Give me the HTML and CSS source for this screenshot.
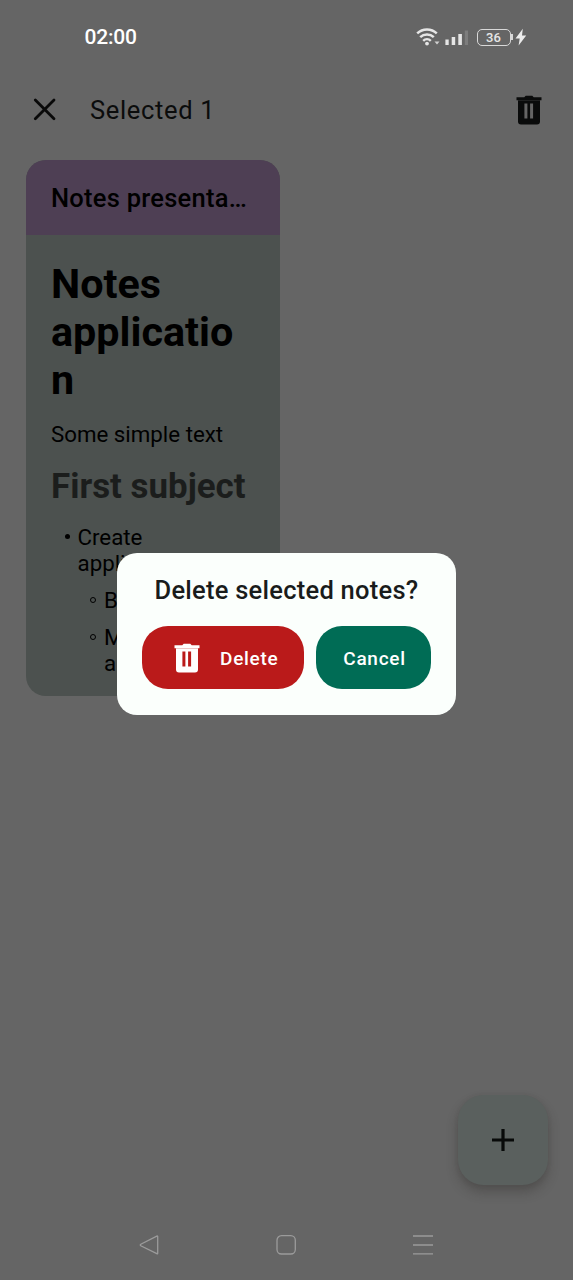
FILE: index.html
```html
<!DOCTYPE html>
<html lang="en">
<head>
<meta charset="utf-8">
<title>Notes</title>
<link rel="stylesheet" href="styles.css">
</head>
<body>
<div class="screen">
  <header class="status">
    <span class="clock">02:00</span>
    <div class="status-icons">
      <svg width="54" height="20" viewBox="0 0 54 20">
        <g fill="none" stroke="#e6e6e6" stroke-width="2.5">
          <path d="M1.2 6.4a14.2 14.2 0 0 1 19.6 0"/>
          <path d="M4.2 10.2a9.8 9.8 0 0 1 13.6 0"/>
          <path d="M7.2 13.8a5.6 5.6 0 0 1 7.6 0"/>
        </g>
        <circle cx="11" cy="16.6" r="1.9" fill="#e6e6e6"/>
        <path d="M18.5 14.6h5l-2.5 2.9z" fill="#d0d0d0"/>
        <path d="M29.4 12.6h3.3v5.4h-3.3zM35.7 10.1h3.5v7.9h-3.5zM42.3 7.1h3.6v10.9h-3.6z" fill="#e6e6e6"/>
        <path d="M48.8 3.5h3.2v14.5h-3.2z" fill="#7d7d7d"/>
      </svg>
      <span class="battery">36</span>
      <svg class="bolt" width="12" height="19" viewBox="0 0 12 19"><path d="M7.8.8L.5 10.4h4.2L3.6 17.6l7.6-10H7z" fill="#ececec"/></svg>
    </div>
  </header>

  <div class="toolbar">
    <svg class="close" width="24" height="24" viewBox="0 0 24 24"><path d="M2.3 2L21 20.7M21 2L2.3 20.7" fill="none" stroke="#090909" stroke-width="2.8" stroke-linecap="round"/></svg>
    <span class="toolbar-title">Selected 1</span>
    <svg class="trash" width="26" height="30" viewBox="0 0 26 30" fill="#0a0b0b"><path fill-rule="evenodd" d="M.5 2.2h7.8L9.7.7h6.6l1.4 1.5h7.8v3H.5zM2 5h22v21.5a3 3 0 0 1-3 3H5a3 3 0 0 1-3-3zM8.4 8.5v15h3v-15zM14.1 8.5v15h3v-15z"/></svg>
  </div>

  <main class="notes">
    <article class="note">
      <div class="note-title">Notes presentation</div>
      <div class="note-body">
        <h1>Notes application</h1>
        <p>Some simple text</p>
        <h2>First subject</h2>
        <ul class="list">
          <li>Create<br>appli
            <ul class="sublist">
              <li>B</li>
              <li>M<br>a</li>
            </ul>
          </li>
        </ul>
      </div>
    </article>
  </main>

  <div class="fab-row">
    <div class="fab">
      <svg width="24" height="24" viewBox="0 0 24 24"><path d="M12 1v22M1 12h22" stroke="#080a09" stroke-width="3.2"/></svg>
    </div>
  </div>

  <nav class="system-nav">
    <svg width="22" height="22" viewBox="0 0 22 22"><path d="M18.7 2.5v16.8q0 .8-.9.4L1.8 11.8q-1-.8 0-1.6L17.8 2.1q.9-.4.9.4z"/></svg>
    <svg width="22" height="22" viewBox="0 0 22 22"><rect x="1" y="1.7" width="18.3" height="18.3" rx="4.5"/></svg>
    <svg width="22" height="22" viewBox="0 0 22 22"><path d="M1 2h20M1 11h20M1 19.8h20"/></svg>
  </nav>

  <div class="overlay">
    <section class="dialog">
      <div class="dialog-title">Delete selected notes?</div>
      <div class="actions">
        <div class="button delete">
          <svg width="26" height="30" viewBox="0 0 26 30" fill="#fff"><path fill-rule="evenodd" d="M.5 2.2h7.8L9.7.7h6.6l1.4 1.5h7.8v3H.5zM2 5h22v21.5a3 3 0 0 1-3 3H5a3 3 0 0 1-3-3zM8.4 8.5v15h3v-15zM14.1 8.5v15h3v-15z"/></svg>
          <span>Delete</span>
        </div>
        <div class="button cancel"><span>Cancel</span></div>
      </div>
    </section>
  </div>
</div>
</body>
</html>
```
FILE: styles.css
```css
* { box-sizing: border-box; }

body {
  margin: 0;
  font-family: Roboto, sans-serif;
}

svg { display: block; flex: none; }

.screen {
  position: relative;
  display: flex;
  flex-direction: column;
  width: 573px;
  height: 1280px;
  overflow: hidden;
  background: #656565;
  color: #000;
}

.status {
  display: flex;
  align-items: center;
  justify-content: space-between;
  height: 74px;
  padding: 0 46.5px 0 84.5px;
}

.clock {
  color: #fff;
  font-size: 21px;
  font-weight: 500;
  line-height: 24px;
  letter-spacing: -0.2px;
}

.status-icons {
  display: flex;
  align-items: center;
}

.battery {
  position: relative;
  width: 34px;
  height: 17px;
  margin: 0 4px 0 7px;
  border: 1.5px solid #d8d8d8;
  border-radius: 5px;
  color: #e6e6e6;
  font-size: 13px;
  font-weight: 500;
  line-height: 15.5px;
  text-align: center;
}

.battery::after {
  content: "";
  position: absolute;
  top: 4px;
  right: -3px;
  width: 1.5px;
  height: 6px;
  background: #d8d8d8;
}

.toolbar {
  display: flex;
  align-items: center;
  height: 72px;
  padding: 0 32px 0 33px;
}

.toolbar-title {
  flex: 1;
  margin-left: 33px;
  color: #0b0c0c;
  font-size: 25.5px;
  letter-spacing: 0.65px;
}

.trash { margin: -1px -0.5px 0 0; }

.notes { padding: 14px 25.5px 0; }

.note {
  width: 254.5px;
  height: 536px;
  overflow: hidden;
  border-radius: 20px;
  background: #4c514f;
}

.note-title {
  height: 74.5px;
  padding: 0 25.5px;
  overflow: hidden;
  background: #4e3f54;
  font-size: 25.5px;
  font-weight: 500;
  line-height: 76px;
  letter-spacing: 0.25px;
  text-overflow: ellipsis;
  white-space: nowrap;
}

.note-body {
  padding: 25px 25.5px 0;
  font-size: 22.3px;
  line-height: 26px;
}

.note-body h1 {
  width: 190px;
  margin: 0 0 17px;
  font-size: 41.3px;
  font-weight: 700;
  line-height: 48.3px;
  overflow-wrap: anywhere;
}

.note-body p { margin: 0 0 19px; }

.note-body h2 {
  margin: 0 0 15.5px;
  color: #1b1d1c;
  font-size: 34.9px;
  font-weight: 700;
  line-height: 42px;
  white-space: nowrap;
}

.list,
.sublist {
  margin: 0;
  padding: 0 0 0 26.5px;
  list-style: none;
}

.list { width: 150px; }

.list li { position: relative; }

.sublist li { margin-top: 11px; }

.list li::before {
  content: "";
  position: absolute;
  top: 10.5px;
  left: -13px;
  width: 5px;
  height: 5px;
  border-radius: 50%;
  background: #000;
}

.sublist li::before {
  left: -14px;
  width: 4px;
  height: 4px;
  border: 1px solid #000;
  background: none;
}

.fab-row {
  display: flex;
  justify-content: flex-end;
  margin-top: auto;
  padding: 0 25px 25px;
}

.fab {
  display: grid;
  place-items: center;
  width: 90px;
  height: 90px;
  border-radius: 25.5px;
  background: #5a605e;
  box-shadow: 0 7px 12px rgba(45, 40, 38, 0.32), 0 1px 5px rgba(45, 40, 38, 0.1);
}

.system-nav {
  display: flex;
  justify-content: space-between;
  align-items: center;
  height: 70px;
  padding: 0 139px;
  fill: none;
  stroke: #9b9b9b;
  stroke-width: 1.3;
}

.overlay {
  position: absolute;
  inset: 0;
  display: flex;
  align-items: center;
  justify-content: center;
  padding-bottom: 12px;
}

.dialog {
  width: 339px;
  height: 162px;
  padding: 19px 25px 25px;
  border-radius: 20px;
  background: #fbfffc;
}

.dialog-title {
  color: #191c1b;
  font-size: 25.5px;
  font-weight: 500;
  line-height: 36px;
  letter-spacing: 0.25px;
  text-align: center;
  white-space: nowrap;
}

.actions {
  display: flex;
  gap: 12.5px;
  margin-top: 18px;
}

.button {
  display: flex;
  align-items: center;
  justify-content: center;
  height: 63px;
  border-radius: 26px;
  color: #fff;
  font-size: 19px;
  font-weight: 500;
  letter-spacing: 0.7px;
}

.button span { padding-top: 2px; }

.delete {
  gap: 20px;
  width: 161.5px;
  padding-left: 7px;
  background: #ba1a1a;
}

.cancel {
  width: 115px;
  padding-left: 2px;
  background: #006c55;
}
```
